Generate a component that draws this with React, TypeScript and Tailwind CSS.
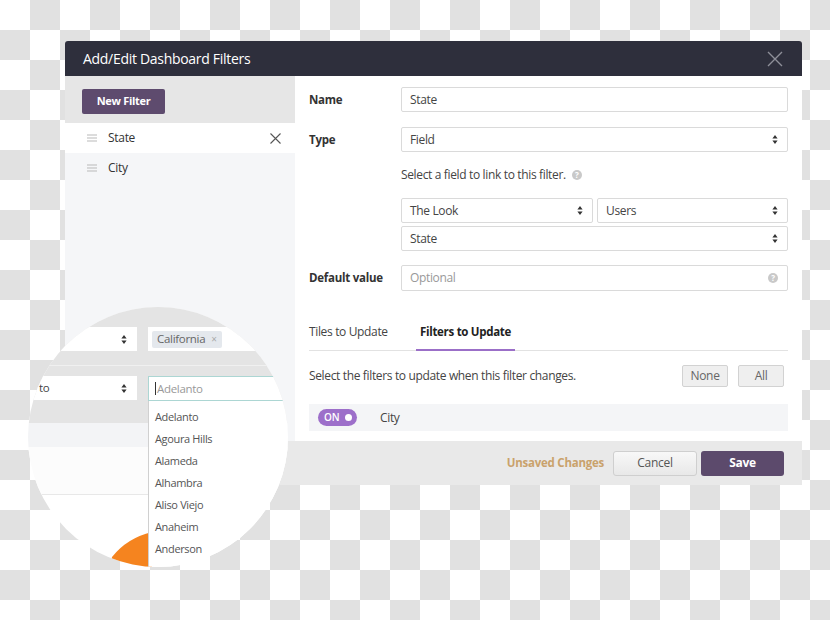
import React from "react";

const Arrows = () => (
  <svg width="6" height="9" viewBox="0 0 6 9" className="shrink-0">
    <path d="M3 0L5.6 3.4H0.4Z M3 9L0.4 5.6H5.6Z" fill="#333" />
  </svg>
);

const Handle = () => (
  <svg width="10" height="8" viewBox="0 0 10 8" className="shrink-0">
    <path d="M0 1H10M0 4H10M0 7H10" stroke="#b9b9b9" strokeWidth="1" />
  </svg>
);

const Help = () => (
  <span className="flex h-[10px] w-[10px] items-center justify-center rounded-full bg-[#c9c9c9] text-[8px] font-bold leading-none text-white">
    ?
  </span>
);

function Select({ label, className }: { label: string; className?: string }) {
  return (
    <div
      className={
        "flex h-[25px] items-center justify-between rounded-[2px] border border-[#dadada] bg-white pl-[8px] pr-[9px] text-[12px] tracking-[-0.35px] text-[#444] " +
        (className ?? "")
      }
    >
      <span>{label}</span>
      <Arrows />
    </div>
  );
}

const cities = ["Adelanto", "Agoura Hills", "Alameda", "Alhambra", "Aliso Viejo", "Anaheim", "Anderson"];

export default function App() {
  return (
    <div className="relative h-[620px] w-[830px] overflow-hidden bg-white bg-[repeating-conic-gradient(#e1e1e1_0_25%,#ffffff_0_50%)] bg-[length:60px_60px] pl-[65px] pt-[41px] font-['Open_Sans',sans-serif]">
      <div className="w-[737px]">
        {/* header */}
        <div className="flex h-[35px] items-center justify-between rounded-t-[3px] bg-[#2e2f3c] pl-[18px] pr-[19px]">
          <span className="text-[14px] tracking-[-0.3px] text-white">Add/Edit Dashboard Filters</span>
          <svg width="16" height="16" viewBox="0 0 16 16">
            <path d="M1 1L15 15M15 1L1 15" stroke="#8e8f99" strokeWidth="1.4" />
          </svg>
        </div>

        {/* body */}
        <div className="flex h-[365px]">
          <div className="flex w-[230px] flex-col bg-[#f5f6f8]">
            <div className="h-[47px] bg-[#e6e6e6] pl-[17px] pt-[11px]">
              <button className="h-[25px] w-[83px] rounded-[2px] bg-[#5e4b6e] text-[11px] font-bold tracking-[-0.3px] text-white">
                New Filter
              </button>
            </div>
            <div className="flex h-[30px] items-center bg-white pl-[22px] pr-[14px] text-[12px] tracking-[-0.3px] text-[#333]">
              <Handle />
              <span className="ml-[11px] flex-1">State</span>
              <svg width="11" height="11" viewBox="0 0 11 11">
                <path d="M0.5 0.5L10.5 10.5M10.5 0.5L0.5 10.5" stroke="#555" strokeWidth="1.1" />
              </svg>
            </div>
            <div className="flex h-[30px] items-center pl-[22px] text-[12px] tracking-[-0.3px] text-[#333]">
              <Handle />
              <span className="ml-[11px]">City</span>
            </div>
          </div>

          <div className="flex-1 bg-white px-[14px] pt-[11px] text-[#333]">
            <div className="flex items-center">
              <span className="w-[92px] text-[11.5px] font-bold tracking-[-0.25px]">Name</span>
              <div className="flex h-[25px] flex-1 items-center rounded-[2px] border border-[#dadada] px-[8px] text-[12px] tracking-[-0.35px] text-[#444]">
                State
              </div>
            </div>
            <div className="mt-[15px] flex items-center">
              <span className="w-[92px] text-[11.5px] font-bold tracking-[-0.25px]">Type</span>
              <Select label="Field" className="flex-1" />
            </div>
            <div className="mt-[15px] flex h-[16px] items-center gap-[6px] pl-[92px] text-[12px] tracking-[-0.35px] text-[#444]">
              <span>Select a field to link to this filter.</span>
              <Help />
            </div>
            <div className="mt-[15px] pl-[92px]">
              <div className="flex gap-[4px]">
                <Select label="The Look" className="w-[192px]" />
                <Select label="Users" className="flex-1" />
              </div>
              <Select label="State" className="mt-[3px]" />
            </div>
            <div className="mt-[14px] flex items-center">
              <span className="w-[92px] text-[11.5px] font-bold tracking-[-0.25px]">Default value</span>
              <div className="flex h-[26px] flex-1 items-center justify-between rounded-[2px] border border-[#dadada] pl-[8px] pr-[9px] text-[12px] tracking-[-0.35px] text-[#999]">
                <span>Optional</span>
                <Help />
              </div>
            </div>

            <div className="mt-[27px] flex border-b border-[#e2e2e2]">
              <div className="flex h-[32px] w-[107px] items-start pt-[5px] text-[12px] tracking-[-0.35px] text-[#444]">
                Tiles to Update
              </div>
              <div className="-mb-px flex h-[33px] items-start border-b-2 border-[#9b6fc8] px-[4px] pt-[5px] text-[11.5px] font-bold tracking-[-0.3px] text-[#222]">
                Filters to Update
              </div>
            </div>

            <div className="mt-[14px] flex h-[22px] items-center justify-between pr-[4px]">
              <span className="text-[12px] tracking-[-0.35px] text-[#444]">
                Select the filters to update when this filter changes.
              </span>
              <div className="flex gap-[10px]">
                <button className="h-[22px] w-[46px] rounded-[2px] border border-[#d2d2d2] bg-[#efefef] text-[12px] tracking-[-0.3px] text-[#666]">
                  None
                </button>
                <button className="h-[22px] w-[46px] rounded-[2px] border border-[#d2d2d2] bg-[#efefef] text-[12px] tracking-[-0.3px] text-[#666]">
                  All
                </button>
              </div>
            </div>

            <div className="mt-[17px] flex h-[27px] items-center bg-[#f4f5f7] pl-[9px]">
              <div className="flex h-[17px] w-[39px] items-center justify-between rounded-full bg-[#9d6fca] pl-[6px] pr-[5px]">
                <span className="text-[10px] font-semibold text-white">ON</span>
                <span className="h-[7px] w-[7px] rounded-full bg-white" />
              </div>
              <span className="ml-[23px] text-[12px] tracking-[-0.35px] text-[#444]">City</span>
            </div>
          </div>
        </div>

        {/* footer */}
        <div className="flex h-[44px] items-center justify-end bg-[#e9e9e9] pr-[18px]">
          <span className="mr-[9px] text-[11.5px] font-bold tracking-[-0.25px] text-[#c9a26c]">Unsaved Changes</span>
          <button className="h-[25px] w-[84px] rounded-[3px] border border-[#cfcfcf] bg-gradient-to-b from-[#f8f8f8] to-[#e8e8e8] text-[12px] tracking-[-0.3px] text-[#555]">
            Cancel
          </button>
          <button className="ml-[4px] h-[25px] w-[83px] rounded-[3px] bg-[#5c4a6c] text-[12px] font-bold tracking-[-0.3px] text-white">
            Save
          </button>
        </div>
      </div>

      {/* magnifier */}
      <div className="absolute left-[28px] top-[307px] h-[260px] w-[260px] overflow-hidden rounded-full bg-white">
        <div className="bg-[#e4e4e4] pb-[22px] pt-[20px]">
          <div className="flex gap-[11px]">
            <div className="ml-[-46px] flex h-[24px] w-[155px] shrink-0 items-center justify-end bg-white pr-[10px]">
              <Arrows />
            </div>
            <div className="flex h-[24px] w-[160px] shrink-0 items-center bg-white pl-[4px]">
              <span className="flex h-[17px] items-center gap-[6px] rounded-[2px] bg-[#e4e8ed] px-[5px] text-[11.5px] tracking-[-0.3px] text-[#666]">
                California
                <span className="text-[10px] text-[#aaa]">×</span>
              </span>
            </div>
          </div>
          <div className="mt-[14px] h-[1px] bg-[#f0f0f0]" />
          <div className="mt-[10px] flex gap-[11px] text-[11.5px] tracking-[-0.3px]">
            <div className="ml-[-46px] flex h-[24px] w-[155px] shrink-0 items-center justify-between bg-white pl-[57px] pr-[10px] text-[#444]">
              <span>to</span>
              <Arrows />
            </div>
            <div className="flex h-[25px] w-[160px] shrink-0 items-center border border-[#acd6d3] bg-white pl-[6px] text-[#999]">
              <span className="mr-[1px] h-[13px] w-[1px] bg-[#333]" />
              Adelanto
            </div>
          </div>
        </div>
        <div className="h-[24px] bg-[#f3f4f6]" />
        <div className="h-[48px] border-b border-[#e8e8e8] bg-[#fcfcfc]" />

        <svg className="absolute left-0 top-0" width="260" height="260" viewBox="0 0 260 260">
          <path d="M84 250Q99 231 124 225L124 270L80 270Z" fill="#f5841f" />
        </svg>

        <div className="absolute left-[120px] top-[94px] h-[200px] w-[170px] border-l border-[#d0d0d0] bg-white pt-[5px] text-[11px] tracking-[-0.35px] text-[#555]">
          {cities.map((c) => (
            <div key={c} className="flex h-[22px] items-center pl-[6px]">
              {c}
            </div>
          ))}
        </div>
      </div>
    </div>
  );
}
